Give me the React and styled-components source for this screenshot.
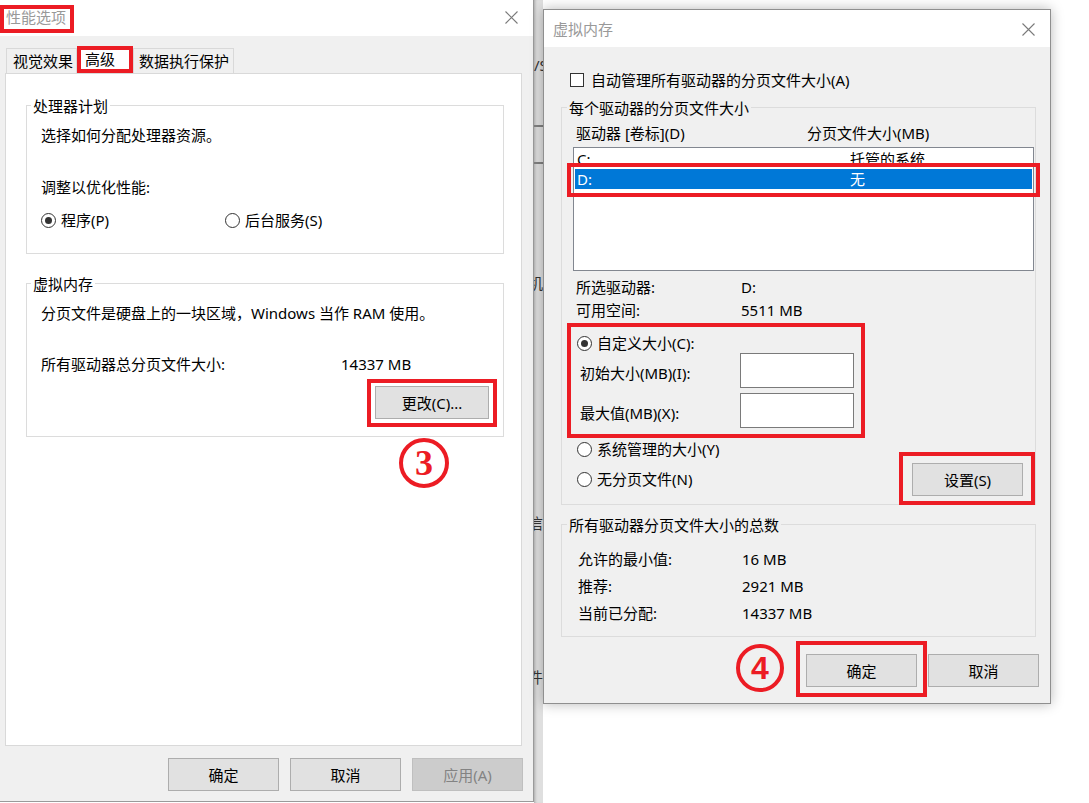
import React from 'react'
import styled, { createGlobalStyle } from 'styled-components'

const RED = '#ec1c24'

const GlobalStyle = createGlobalStyle`
  html, body { margin: 0; padding: 0; background: #ffffff; }
  body {
    font-family: "Noto Sans", "Noto Sans CJK SC", sans-serif;
    font-size: 15px;
    color: #000;
  }
  * { box-sizing: border-box; }
`

const Screen = styled.div`
  width: 1089px;
  height: 803px;
  display: flex;
  overflow: hidden;
  background: #fff;
`

/* ---------- shared window parts ---------- */

const TitleBar = styled.div`
  height: ${p => p.$h}px;
  flex-shrink: 0;
  background: #fff;
  display: flex;
  justify-content: space-between;
  align-items: flex-start;
  padding: ${p => p.$pad};
`

const TitleText = styled.div`
  color: #999;
  line-height: 20px;
  margin-top: ${p => p.$mt || 0}px;
`

const TitleMark = styled.div`
  width: 74px;
  height: 28px;
  border: 4px solid ${RED};
  padding-left: 2px;
  color: #999;
  line-height: 16px;
  white-space: nowrap;
`

const CloseX = styled.svg`
  width: 13px;
  height: 13px;
  margin-top: ${p => p.$mt}px;
  display: block;
`

const Close = ({ mt }) => (
  <CloseX $mt={mt} viewBox="0 0 13 13">
    <path d="M0.5 0.5 L12.5 12.5 M12.5 0.5 L0.5 12.5" stroke="#7a7a7a" strokeWidth="1.1" fill="none" />
  </CloseX>
)

const Button = styled.button`
  width: ${p => p.$w || 111}px;
  height: 33px;
  padding: 0;
  font: inherit;
  font-size: 15px;
  background: ${p => (p.disabled ? '#cccccc' : '#e1e1e1')};
  border: 1px solid ${p => (p.disabled ? '#bfbfbf' : '#adadad')};
  color: ${p => (p.disabled ? '#838383' : '#000')};
  display: block;
`

const ButtonBar = styled.div`
  display: flex;
  justify-content: flex-end;
  gap: ${p => p.$gap}px;
  margin: ${p => p.$margin};
  flex-shrink: 0;
`

const GroupBox = styled.div`
  border: 1px solid #dcdcdc;
  margin-top: ${p => p.$mt}px;
  padding-bottom: ${p => p.$pb}px;
  display: flex;
  flex-direction: column;
`

const GroupTitle = styled.div`
  align-self: flex-start;
  margin: -10px 0 0 ${p => p.$ml}px;
  padding: 0 2px;
  line-height: 20px;
  background: ${p => p.$bg};
  white-space: nowrap;
`

const Line = styled.div`
  line-height: ${p => p.$lh || 20}px;
  margin-top: ${p => p.$mt || 0}px;
  padding-left: ${p => p.$pl || 0}px;
  white-space: nowrap;
  display: flex;
`

const Cell = styled.span`
  width: ${p => p.$w}px;
  flex-shrink: 0;
`

const Marked = styled.div`
  position: relative;
  &::after {
    content: '';
    position: absolute;
    pointer-events: none;
    top: ${p => p.$t}px;
    right: ${p => p.$r}px;
    bottom: ${p => p.$b}px;
    left: ${p => p.$l}px;
    border: 4px solid ${RED};
    z-index: 3;
  }
`

const Badge = styled.div`
  position: absolute;
  left: ${p => p.$x}px;
  top: ${p => p.$y}px;
  width: ${p => p.$size}px;
  height: ${p => p.$size}px;
  border: 4px solid ${RED};
  border-radius: 50%;
  color: ${RED};
  font-family: ${p => p.$serif ? '"Liberation Serif", serif' : '"Liberation Sans", sans-serif'};
  font-weight: bold;
  font-size: ${p => p.$fs}px;
  line-height: 1;
  display: flex;
  align-items: center;
  justify-content: center;
  z-index: 4;
`

const RadioRow = styled.label`
  display: flex;
  align-items: center;
  line-height: 20px;
  padding-left: ${p => p.$pl || 0}px;
  width: ${p => (p.$w ? p.$w + 'px' : 'auto')};
  white-space: nowrap;
`

const RadioDot = styled.span`
  width: 15px;
  height: 15px;
  border: 1px solid #333;
  border-radius: 50%;
  background: #fff;
  margin-right: 5px;
  flex-shrink: 0;
  display: flex;
  align-items: center;
  justify-content: center;
  &::after {
    content: '';
    width: 7px;
    height: 7px;
    border-radius: 50%;
    background: #333;
    display: ${p => (p.$on ? 'block' : 'none')};
  }
`

const Radio = ({ on, children, pl, w }) => (
  <RadioRow $pl={pl} $w={w}>
    <RadioDot $on={on} />
    {children}
  </RadioRow>
)

/* ---------- left window: 性能选项 ---------- */

const LeftWindow = styled.div`
  width: 534px;
  height: 802px;
  flex-shrink: 0;
  background: #f0f0f0;
  border-right: 1px solid #9a9a9a;
  border-bottom: 1px solid #9a9a9a;
  display: flex;
  flex-direction: column;
`

const TabRow = styled.div`
  display: flex;
  align-items: flex-end;
  height: 27px;
  margin-top: 10px;
  padding-left: 6px;
  flex-shrink: 0;
`

const Tab = styled.div`
  width: ${p => p.$w}px;
  height: 25px;
  padding-left: ${p => p.$pl}px;
  border: 1px solid #d9d9d9;
  border-bottom: none;
  background: #f0f0f0;
  line-height: 24px;
  white-space: nowrap;
`

const ActiveTab = styled.div`
  width: 56px;
  height: 27px;
  border: 4px solid ${RED};
  background: #fff;
  padding-left: 4px;
  line-height: 19px;
  white-space: nowrap;
`

const Panel = styled.div`
  margin-left: 5px;
  width: 517px;
  height: 673px;
  flex-shrink: 0;
  background: #fff;
  border: 1px solid #d9d9d9;
  padding: 0 17px 0 20px;
  display: flex;
  flex-direction: column;
`

const GroupBody = styled.div`
  display: flex;
  flex-direction: column;
  padding: 0 ${p => p.$pr || 0}px 0 ${p => p.$pl || 0}px;
`

const RadioLine = styled.div`
  display: flex;
  margin-top: ${p => p.$mt}px;
`

const ActionRow = styled.div`
  display: flex;
  justify-content: flex-end;
  margin-top: ${p => p.$mt}px;
`

/* ---------- gap between the windows ---------- */

const Backdrop = styled.div`
  width: 9px;
  height: 803px;
  flex-shrink: 0;
  background: #dfdfdf;
  box-shadow: inset 3px 0 3px -2px rgba(0, 0, 0, 0.25);
  overflow: hidden;
  display: flex;
  flex-direction: column;
`

const Scrap = styled.div`
  margin-top: ${p => p.$mt}px;
  margin-left: ${p => p.$ml || 0}px;
  height: 20px;
  line-height: 20px;
  color: #333;
  white-space: nowrap;
  flex-shrink: 0;
`

const ScrapRule = styled.div`
  margin-top: ${p => p.$mt}px;
  height: 2px;
  background: #808080;
  flex-shrink: 0;
`

/* ---------- right window: 虚拟内存 ---------- */

const RightArea = styled.div`
  flex: 1;
  padding-top: 9px;
  background: #fff;
`

const Dialog = styled.div`
  width: 508px;
  background: #f0f0f0;
  border: 1px solid #8f8f8f;
  box-shadow: 0 0 12px rgba(0, 0, 0, 0.28);
  display: flex;
  flex-direction: column;
`

const DialogBody = styled.div`
  display: flex;
  flex-direction: column;
  padding: 23px 14px 16px 17px;
`

const CheckRow = styled.label`
  display: flex;
  align-items: center;
  line-height: 20px;
  padding-left: 9px;
  white-space: nowrap;
`

const CheckBox = styled.span`
  width: 14px;
  height: 14px;
  border: 1px solid #333;
  background: #fff;
  margin-right: 7px;
  flex-shrink: 0;
`

const ListBox = styled.div`
  margin-top: 4px;
  height: 124px;
  border: 1px solid #828790;
  background: #fff;
  padding: 1px;
`

const ListRow = styled.div`
  height: 20px;
  line-height: 20px;
  padding-left: 2px;
  display: flex;
  background: ${p => (p.$sel ? '#0078d7' : 'transparent')};
  color: ${p => (p.$sel ? '#fff' : '#000')};
`

const CustomBlock = styled(Marked)`
  margin-top: 11px;
  width: 281px;
  display: flex;
  flex-direction: column;
`

const SizeRow = styled.div`
  display: flex;
  align-items: center;
  height: 35px;
  margin-top: ${p => p.$mt}px;
  padding-left: 7px;
`

const SizeLabel = styled.span`
  width: 160px;
  padding-top: 3px;
  white-space: nowrap;
`

const SizeInput = styled.input`
  width: 114px;
  height: 35px;
  border: 1px solid #7a7a7a;
  background: #fff;
  font: inherit;
  padding: 0 4px;
`

const BottomRow = styled.div`
  display: flex;
  justify-content: space-between;
  align-items: flex-end;
  margin-top: 11px;
`

const RadioStack = styled.div`
  display: flex;
  flex-direction: column;
  gap: 10px;
  padding-bottom: 7px;
`

const drives = [
  { id: 'C', name: 'C:', size: '托管的系统' },
  { id: 'D', name: 'D:', size: '无', selected: true },
]

const totals = [
  ['允许的最小值:', '16 MB'],
  ['推荐:', '2921 MB'],
  ['当前已分配:', '14337 MB'],
]

const App = () => {
  return (
    <Screen>
      <GlobalStyle />

      <LeftWindow>
        <TitleBar $h={36} $pad="5px 15px 0 0">
          <TitleMark>性能选项</TitleMark>
          <Close mt={6} />
        </TitleBar>

        <TabRow>
          <Tab $w={71} $pl={6}>视觉效果</Tab>
          <ActiveTab>高级</ActiveTab>
          <Tab $w={101} $pl={5}>数据执行保护</Tab>
        </TabRow>

        <Panel>
          <GroupBox $mt={31} $pb={23}>
            <GroupTitle $ml={4} $bg="#fff">处理器计划</GroupTitle>
            <GroupBody $pl={14}>
              <Line $mt={9}>选择如何分配处理器资源。</Line>
              <Line $mt={32}>调整以优化性能:</Line>
              <RadioLine $mt={13}>
                <Radio on w={184}>程序(P)</Radio>
                <Radio>后台服务(S)</Radio>
              </RadioLine>
            </GroupBody>
          </GroupBox>

          <GroupBox $mt={29} $pb={17}>
            <GroupTitle $ml={4} $bg="#fff">虚拟内存</GroupTitle>
            <GroupBody $pl={14} $pr={14}>
              <Line $mt={9}>分页文件是硬盘上的一块区域，Windows 当作 RAM 使用。</Line>
              <Line $mt={31}>
                <Cell $w={300}>所有驱动器总分页文件大小:</Cell>
                <span>14337 MB</span>
              </Line>
              <ActionRow $mt={12}>
                <Marked $t={-7} $r={-8} $b={-8} $l={-8}>
                  <Button $w={114}>更改(C)...</Button>
                  <Badge $x={24} $y={52} $size={50} $fs={36} $serif>3</Badge>
                </Marked>
              </ActionRow>
            </GroupBody>
          </GroupBox>
        </Panel>

        <ButtonBar $gap={11} $margin="12px 10px 0 0">
          <Button>确定</Button>
          <Button>取消</Button>
          <Button disabled>应用(A)</Button>
        </ButtonBar>
      </LeftWindow>

      <Backdrop>
        <Scrap $mt={55}>/S</Scrap>
        <ScrapRule $mt={50} />
        <ScrapRule $mt={35} />
        <Scrap $mt={109} $ml={-6}>机</Scrap>
        <Scrap $mt={220} $ml={-6}>信</Scrap>
        <Scrap $mt={134} $ml={-6}>件</Scrap>
      </Backdrop>

      <RightArea>
        <Dialog>
          <TitleBar $h={37} $pad="0 15px 0 9px">
            <TitleText $mt={9}>虚拟内存</TitleText>
            <Close mt={13} />
          </TitleBar>

          <DialogBody>
            <CheckRow>
              <CheckBox />
              自动管理所有驱动器的分页文件大小(A)
            </CheckRow>

            <GroupBox $mt={17} $pb={8}>
              <GroupTitle $ml={5} $bg="#f0f0f0">每个驱动器的分页文件大小</GroupTitle>
              <GroupBody $pl={11} $pr={1}>
                <Line $mt={5} $pl={3}>
                  <Cell $w={231}>驱动器 [卷标](D)</Cell>
                  <span>分页文件大小(MB)</span>
                </Line>

                <ListBox>
                  {drives.map(d => {
                    const row = (
                      <ListRow key={d.id} $sel={d.selected}>
                        <Cell $w={273}>{d.name}</Cell>
                        <span>{d.size}</span>
                      </ListRow>
                    )
                    return d.selected ? (
                      <Marked key={d.id} $t={-6} $r={-8} $b={-8} $l={-8}>{row}</Marked>
                    ) : row
                  })}
                </ListBox>

                <Line $mt={5} $lh={23} $pl={3}>
                  <Cell $w={165}>所选驱动器:</Cell>
                  <span>D:</span>
                </Line>
                <Line $lh={23} $pl={3}>
                  <Cell $w={165}>可用空间:</Cell>
                  <span>5511 MB</span>
                </Line>

                <CustomBlock $t={-10} $r={-11} $b={-10} $l={-6}>
                  <Radio on pl={4}>自定义大小(C):</Radio>
                  <SizeRow $mt={0}>
                    <SizeLabel>初始大小(MB)(I):</SizeLabel>
                    <SizeInput />
                  </SizeRow>
                  <SizeRow $mt={5}>
                    <SizeLabel>最大值(MB)(X):</SizeLabel>
                    <SizeInput />
                  </SizeRow>
                </CustomBlock>

                <BottomRow>
                  <RadioStack>
                    <Radio pl={4}>系统管理的大小(Y)</Radio>
                    <Radio pl={4}>无分页文件(N)</Radio>
                  </RadioStack>
                  <Marked $t={-11} $r={-12} $b={-9} $l={-13} style={{ marginRight: 11 }}>
                    <Button>设置(S)</Button>
                  </Marked>
                </BottomRow>
              </GroupBody>
            </GroupBox>

            <GroupBox $mt={19} $pb={9}>
              <GroupTitle $ml={5} $bg="#f0f0f0">所有驱动器分页文件大小的总数</GroupTitle>
              <GroupBody $pl={16}>
                {totals.map(([k, v], i) => (
                  <Line key={k} $lh={27} $mt={i === 0 ? 11 : 0}>
                    <Cell $w={164}>{k}</Cell>
                    <span>{v}</span>
                  </Line>
                ))}
              </GroupBody>
            </GroupBox>

            <ButtonBar $gap={11} $margin="17px -3px 0 0">
              <Marked $t={-13} $r={-10} $b={-10} $l={-10}>
                <Button>确定</Button>
                <Badge $x={-70} $y={-10} $size={48} $fs={32}>4</Badge>
              </Marked>
              <Button>取消</Button>
            </ButtonBar>
          </DialogBody>
        </Dialog>
      </RightArea>
    </Screen>
  )
}

export default App
